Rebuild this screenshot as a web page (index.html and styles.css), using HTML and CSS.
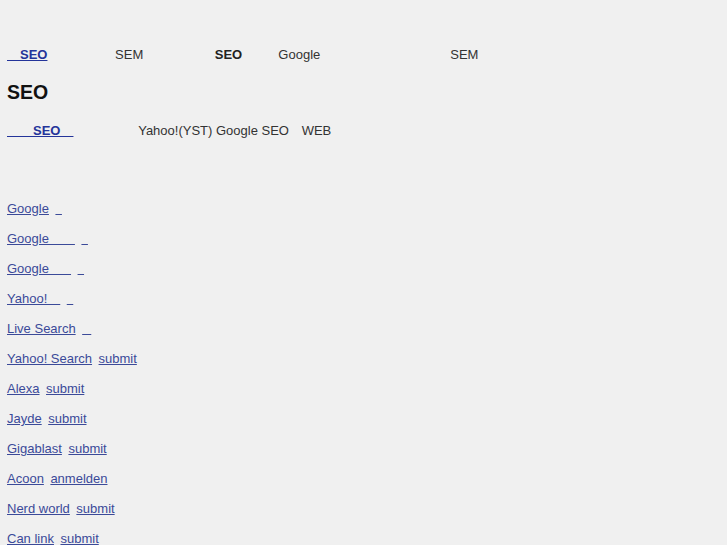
FILE: index.html
```html
<!DOCTYPE html>
<html lang="ja">
<head>
    <meta charset="UTF-8">
    <meta name="viewport" content="width=device-width, initial-scale=1.0">
    <title>SEO</title>
    <link rel="stylesheet" href="styles.css">
</head>
<body>
    <div class="site-title"></div>

    <p class="lead"><a href="#" class="nav-link">&emsp;SEO</a>&emsp;&emsp;&emsp;&emsp;&emsp;&thinsp;SEM&emsp;&emsp;&emsp;&emsp;&emsp;&ensp;<strong>SEO</strong>&emsp;&emsp;&ensp; Google&emsp;&emsp;&emsp;&emsp;&emsp;&emsp;&emsp;&emsp;&emsp;&emsp;SEM</p>

    <h2>SEO</h2>

    <p class="intro"><a href="#" class="nav-link">&emsp;&emsp;SEO&emsp;</a>&emsp;&emsp;&emsp;&emsp;&ensp; &thinsp;Yahoo!(YST) Google SEO&ensp;&thinsp; WEB</p>

    <ul class="engines">
        <li><a href="#">Google</a>&ensp;<a href="#">&ensp;</a></li>
        <li><a href="#">Google&emsp;&emsp;</a>&ensp;<a href="#">&ensp;</a></li>
        <li><a href="#">Google&emsp;&ensp;&thinsp;</a>&ensp;<a href="#">&ensp;</a></li>
        <li><a href="#">Yahoo!&emsp;</a>&ensp;<a href="#">&ensp;</a></li>
        <li><a href="#">Live Search</a>&ensp;<a href="#">&ensp;&thinsp;</a></li>
        <li><a href="#">Yahoo! Search</a>&ensp;<a href="#">submit</a></li>
        <li><a href="#">Alexa</a>&ensp;<a href="#">submit</a></li>
        <li><a href="#">Jayde</a>&ensp;<a href="#">submit</a></li>
        <li><a href="#">Gigablast</a>&ensp;<a href="#">submit</a></li>
        <li><a href="#">Acoon</a>&ensp;<a href="#">anmelden</a></li>
        <li><a href="#">Nerd world</a>&ensp;<a href="#">submit</a></li>
        <li><a href="#">Can link</a>&ensp;<a href="#">submit</a></li>
    </ul>
</body>
</html>
```

FILE: styles.css
```css
body {
    font-family: 'Liberation Sans', Arial, sans-serif;
    font-size: 13px;
    line-height: 15px;
    color: #333;
    background-color: #f0f0f0;
    margin: 0;
    padding: 0 7px;
}

.site-title {
    height: 47px;
}

a {
    color: #3b4a99;
}

.nav-link {
    color: #24349a;
    font-weight: bold;
}

.lead {
    margin: 0;
    white-space: nowrap;
}

.lead strong {
    color: #222;
}

h2 {
    font-size: 19.5px;
    line-height: 23px;
    color: #111;
    margin: 19px 0 19px;
}

.intro {
    margin: 0;
    white-space: nowrap;
}

.engines {
    list-style: none;
    margin: 56px 0 0;
    padding: 0;
}

.engines li {
    line-height: 30px;
    white-space: nowrap;
}
```
